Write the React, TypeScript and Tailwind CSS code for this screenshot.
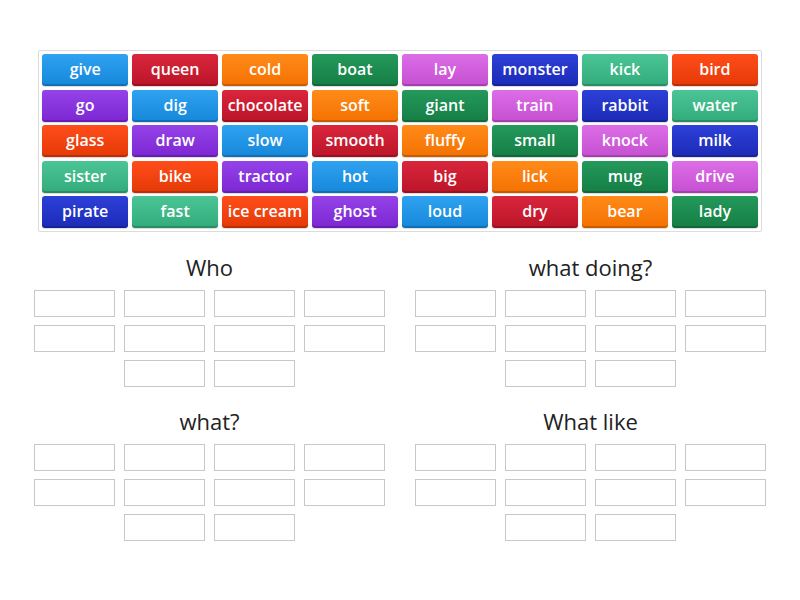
import React from 'react';

const palette = [
  'from-[#2fa2f0] to-[#1587da]', // blue
  'from-[#da263c] to-[#bb1428]', // red
  'from-[#ff8b18] to-[#f47100]', // orange
  'from-[#24995b] to-[#157e44]', // green
  'from-[#dd6de7] to-[#c54fd1]', // orchid
  'from-[#2d40d8] to-[#1c2ab6]', // navy
  'from-[#4cc596] to-[#32ab7b]', // teal
  'from-[#ff4d19] to-[#e43906]', // red-orange
  'from-[#9542e9] to-[#7c26d2]', // purple
];

const words = [
  'give', 'queen', 'cold', 'boat', 'lay', 'monster', 'kick', 'bird',
  'go', 'dig', 'chocolate', 'soft', 'giant', 'train', 'rabbit', 'water',
  'glass', 'draw', 'slow', 'smooth', 'fluffy', 'small', 'knock', 'milk',
  'sister', 'bike', 'tractor', 'hot', 'big', 'lick', 'mug', 'drive',
  'pirate', 'fast', 'ice cream', 'ghost', 'loud', 'dry', 'bear', 'lady',
];

function Group({ title }: { title: string }) {
  return (
    <div className="w-[351px]">
      <h2 className="text-center text-[22px] leading-[28px] text-[#222] mb-[9px]">{title}</h2>
      <div className="flex flex-wrap justify-center gap-[8px_9px]">
        {Array.from({ length: 10 }).map((_, i) => (
          <div key={i} className="w-[81px] h-[27px] border border-[#c8c8c8] bg-white" />
        ))}
      </div>
    </div>
  );
}

export default function App() {
  return (
    <div className="w-[800px] h-[600px] bg-white font-['Open_Sans',sans-serif] pt-[50px]">
      {/* Word tiles */}
      <div className="ml-[38px] w-[724px] border border-[#dcdcdc] rounded-[2px] p-[3px] grid grid-cols-8 gap-[3.5px_3.6px]">
        {words.map((w, i) => (
          <div
            key={w}
            className={`h-[32px] pb-[2px] rounded-[3px] bg-gradient-to-b ${palette[i % 9]} shadow-[inset_0_-2px_0_rgba(0,0,0,0.18),0_1px_1px_rgba(0,0,0,0.15)] flex items-center justify-center text-white font-semibold text-[16px] whitespace-nowrap`}
          >
            {w}
          </div>
        ))}
      </div>

      {/* Drop groups */}
      <div className="ml-[34px] mt-[21px] grid grid-cols-[351px_351px] gap-x-[30px] gap-y-[20px]">
        <Group title="Who" />
        <Group title="what doing?" />
        <Group title="what?" />
        <Group title="What like" />
      </div>
    </div>
  );
}
